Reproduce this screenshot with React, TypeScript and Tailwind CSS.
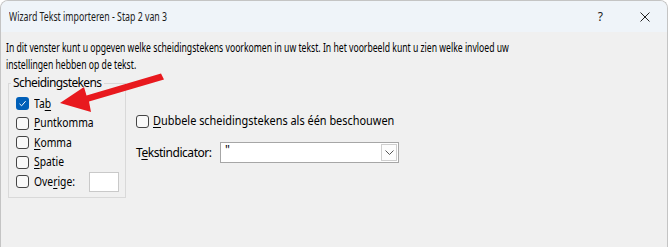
import React from 'react';

const ui = { fontFamily: '"Segoe UI", "Noto Sans", "Open Sans", sans-serif' };

function Box({ checked }: { checked?: boolean }) {
  if (checked) {
    return (
      <span className="w-[13px] h-[13px] rounded-[3px] bg-[#005fb8] flex items-center justify-center shrink-0">
        <svg width="9" height="9" viewBox="0 0 9 9">
          <path d="M1.5 4.8 L3.6 6.8 L7.6 2.2" fill="none" stroke="#ffffff" strokeWidth="1" />
        </svg>
      </span>
    );
  }
  return <span className="w-[13px] h-[13px] rounded-[3px] border border-[#454545] bg-[#f9f9f9] shrink-0" />;
}

function Label({ pre, key_, post }: { pre: string; key_: string; post: string }) {
  return (
    <span className="whitespace-nowrap">
      {pre}
      <span className="underline underline-offset-[2px]">{key_}</span>
      {post}
    </span>
  );
}

const options = [
  { pre: 'Ta', k: 'b', post: '', checked: true },
  { pre: '', k: 'P', post: 'untkomma' },
  { pre: '', k: 'K', post: 'omma' },
  { pre: '', k: 'S', post: 'patie' },
];

export default function App() {
  return (
    <div
      className="w-[668px] h-[247px] overflow-hidden relative bg-[#f0f0f0] text-black rounded-t-[8px] border border-b-0 border-[#c4c4c4]"
      style={ui}
    >
      {/* Title bar */}
      <div className="h-[31px] bg-[#eff4f9] flex items-center pl-[8px] text-[12px] text-[#1b1b1b]">
        <span className="whitespace-nowrap origin-left scale-x-[0.73] leading-none">
          Wizard Tekst importeren - Stap 2 van 3
        </span>
        <span className="ml-auto mr-[37px] text-[12px] leading-none">?</span>
        <svg width="10" height="10" viewBox="0 0 10 10" className="mr-[17px]">
          <path d="M0.5 0.5 L9.5 9.5 M9.5 0.5 L0.5 9.5" stroke="#222" strokeWidth="1" />
        </svg>
      </div>

      {/* Body */}
      <div className="px-[5px] pt-[7px]">
        <div className="text-[12px] leading-[17px] whitespace-nowrap origin-left scale-x-[0.72]">
          <div>
            In dit venster kunt u opgeven welke scheidingstekens voorkomen in uw tekst. In het voorbeeld kunt u zien
            welke invloed uw
          </div>
          <div>instellingen hebben op de tekst.</div>
        </div>

        <div className="flex mt-[2px] pl-[2px] text-[12px]">
          <fieldset className="w-[118px] h-[123px] border border-[#d9d9d9] pl-[7px] pr-[6px] pt-[3px]">
            <legend className="-ml-[5px] px-[2px] leading-[16px] tracking-[-0.6px]">Scheidingstekens</legend>
            {options.map((o) => (
              <div key={o.pre + o.k} className="h-[19.5px] flex items-center">
                <Box checked={o.checked} />
                <span className="ml-[5px] origin-left scale-x-[0.86]">
                  <Label pre={o.pre} key_={o.k} post={o.post} />
                </span>
              </div>
            ))}
            <div className="h-[19.5px] flex items-center">
              <Box />
              <span className="ml-[5px] origin-left scale-x-[0.86]">
                <Label pre="Ove" key_="r" post="ige:" />
              </span>
              <span className="ml-auto w-[30px] h-[20px] bg-white border border-[#c9c9c9] shrink-0" />
            </div>
          </fieldset>

          <div className="ml-[10px] pt-[36px]">
            <div className="h-[20px] flex items-center">
              <Box />
              <span className="ml-[4px] origin-left scale-x-[0.91]">
                <Label pre="" key_="D" post="ubbele scheidingstekens als één beschouwen" />
              </span>
            </div>
            <div className="mt-[11px] flex items-center">
              <span className="w-[84px] tracking-[-0.45px]">
                <Label pre="T" key_="e" post="kstindicator:" />
              </span>
              <div className="w-[179px] h-[21px] bg-white border border-[#a6a6a6] flex">
                <span className="pl-[4px] leading-[14px] text-[12px]">"</span>
                <span className="ml-auto my-[1px] mr-[1px] w-[16px] border border-[#cfcfcf] bg-[#fdfdfd] flex items-center justify-center">
                  <svg width="9" height="5" viewBox="0 0 9 5">
                    <path d="M0.5 0.5 L4.5 4.5 L8.5 0.5" fill="none" stroke="#555" strokeWidth="1" />
                  </svg>
                </span>
              </div>
            </div>
          </div>
        </div>
      </div>

      {/* Red annotation arrow */}
      <svg className="absolute left-0 top-0 pointer-events-none" width="668" height="247" viewBox="0 0 668 247">
        <polygon
          points="59,102 83,86 85.5,94.5 160,72.5 163,78.5 88,100.5 90,111"
          fill="#e8191e"
        />
      </svg>
    </div>
  );
}
